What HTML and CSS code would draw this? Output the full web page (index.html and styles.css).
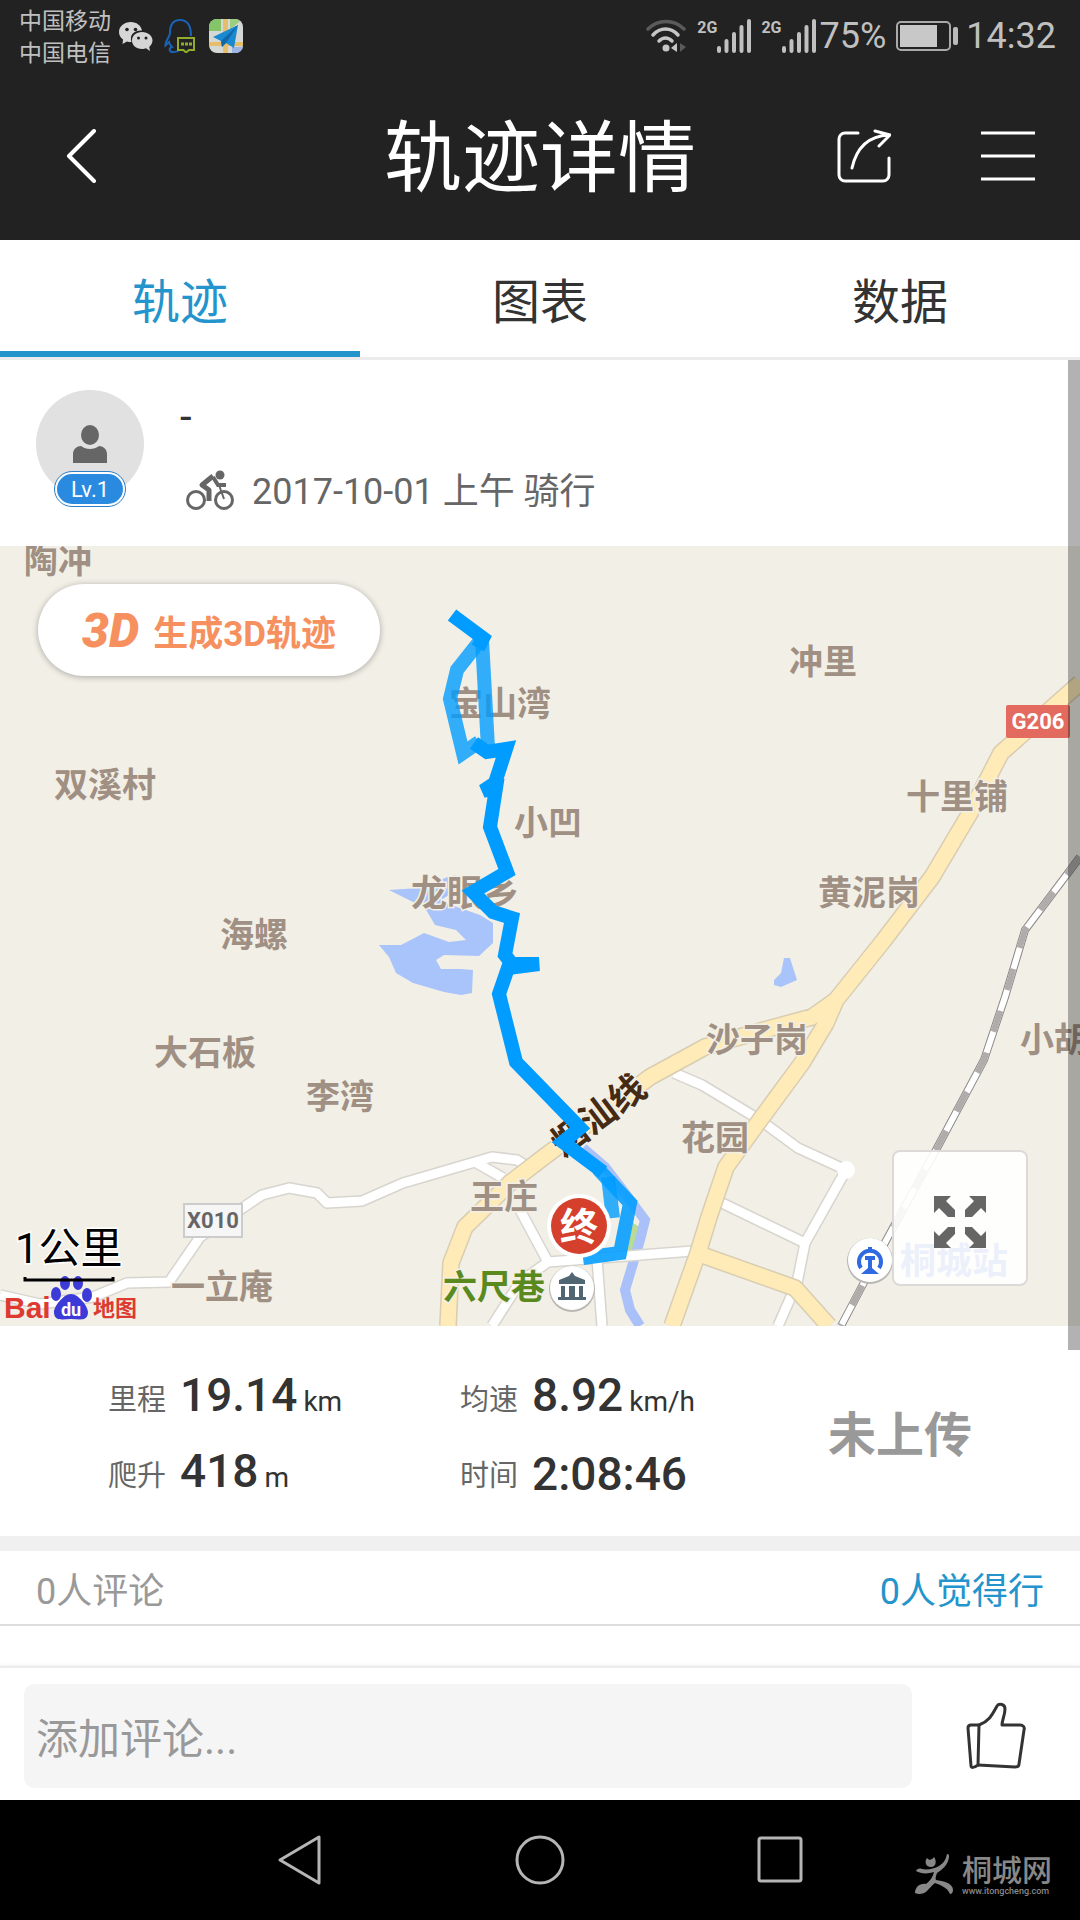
FILE: index.html
```
<!DOCTYPE html>
<html lang="zh-CN">
<head>
    <meta charset="UTF-8">
    <meta name="viewport" content="width=device-width, initial-scale=1.0">
    <title>轨迹详情</title>
    <link rel="stylesheet" href="styles.css">
</head>
<body>
    <div class="status-bar">
        <div class="status-left">
            <div class="carriers">
                <div>中国移动</div>
                <div>中国电信</div>
            </div>
            <div class="notifications">
                <!-- WeChat -->
                <svg width="34" height="34" viewBox="0 0 34 34">
                    <path d="M12 3C5 3 0 7.500 0 13c0 3 1.500 5.500 4 7.500L3.500 25l4.500-2.500c1.500.5 3 .6 4.500.5C10 15 16 11 23 11.500 22 6.500 17.500 3 12 3z" fill="#d6d6d6"/>
                    <path d="M23 13c-6 0-10 4-10 8.500S17 30 23 30c1.500 0 3-.3 4-.7l4 2.700-.8-4c2-1.700 3.300-4 3.300-6.500 0-4.500-4.500-8.500-10.500-8.500z" fill="#d6d6d6"/>
                    <circle cx="8" cy="10.500" r="1.800" fill="#222"/>
                    <circle cx="16.500" cy="10.500" r="1.800" fill="#222"/>
                    <circle cx="19.500" cy="19" r="1.500" fill="#222"/>
                    <circle cx="27" cy="19" r="1.500" fill="#222"/>
                </svg>
                <!-- QQ -->
                <svg width="34" height="34" viewBox="0 0 34 34">
                    <path d="M27 17C27 6 23 1 16 1S6 6 6 14c0 4-5 8-4.500 12.500L5 23c.5 2 1.500 3.500 3 5-3 1-3.500 5 1 5 3 0 5-.5 6-2" fill="none" stroke="#1a62b8" stroke-width="2"/>
                    <path d="M14 19h16v12h-5l-3 2.500-2.500-2.500H14z" fill="#222" stroke="#8fac2c" stroke-width="2"/>
                    <path d="M17 25h3m1 0h3m1 0h3" stroke="#8fac2c" stroke-width="3"/>
                </svg>
                <!-- Maps -->
                <svg width="34" height="34" viewBox="0 0 34 34">
                    <rect width="34" height="34" rx="8" fill="#d5d9d6"/>
                    <path d="M8 0h4v12H0V8a8 8 0 0 1 8-8z" fill="#83c568"/>
                    <path d="M21 0h5a8 8 0 0 1 5 2l-10 9z" fill="#9dcd80"/>
                    <path d="M14 0h5v34h-5zM0 23h34v4H0z" fill="#e6bd6b"/>
                    <path d="M23 28h11c-1 4-4 6-8 6h-3z" fill="#9db5e5"/>
                    <path d="M29 6 4 18l8 4 1 6 4-4 8 5z" fill="#198ad1"/>
                    <path d="M29 6 12 22l1 6 4-4z" fill="#1167a8"/>
                </svg>
            </div>
        </div>
        <div class="status-right">
            <svg class="wifi" width="40" height="34" viewBox="0 0 40 34">
                <g fill="none" stroke="#c6c6c6" stroke-width="3.500" stroke-linecap="round">
                    <path d="M2 10c10-10 26-10 36 0" stroke="#5a5a5a"/>
                    <path d="M7 16c7-8 18-8 25 0"/>
                    <path d="M13 22c4-4 9-4 13 0"/>
                </g>
                <circle cx="20" cy="29" r="3.500" fill="#c6c6c6"/>
                <path d="m31 24-6 5 6 4z" fill="#c6c6c6"/>
                <path d="M34 24v9l6-5z" fill="#5a5a5a"/>
            </svg>
            <div class="signal">
                <span>2G</span>
                <svg width="34" height="34" viewBox="0 0 34 34">
                    <path d="M2 29v3M9.500 22v10M17 15v17M24.500 8v24M32 2v30" stroke="#c0c0c0" stroke-width="4" stroke-linecap="round"/>
                </svg>
            </div>
            <div class="signal">
                <span>2G</span>
                <svg width="34" height="34" viewBox="0 0 34 34">
                    <path d="M2 29v3M9.500 22v10M17 15v17M24.500 8v24M32 2v30" stroke="#c0c0c0" stroke-width="4" stroke-linecap="round"/>
                </svg>
            </div>
            <span class="percent">75%</span>
            <svg class="battery" width="62" height="30" viewBox="0 0 62 30">
                <rect x="1" y="1" width="53" height="28" rx="4" fill="none" stroke="#aaa" stroke-width="2"/>
                <rect x="4" y="4" width="37" height="22" fill="#c8c8c8"/>
                <rect x="57" y="6" width="5" height="18" rx="2" fill="#bbb"/>
            </svg>
            <span class="clock">14:32</span>
        </div>
    </div>

    <header class="header">
        <button class="icon-btn back" aria-label="返回">
            <svg width="30" height="54" viewBox="0 0 30 54">
                <path d="M28 2 3 27l25 25" fill="none" stroke="#fff" stroke-width="4" stroke-linecap="round" stroke-linejoin="round"/>
            </svg>
        </button>
        <h1>轨迹详情</h1>
        <div class="header-actions">
            <button class="icon-btn" aria-label="分享">
                <svg width="54" height="54" viewBox="0 0 54 54">
                    <g fill="none" stroke="#fff" stroke-width="3" stroke-linecap="round" stroke-linejoin="round">
                        <path d="M21 4H8a6 6 0 0 0-6 6v36a6 6 0 0 0 6 6h38a6 6 0 0 0 6-6V29"/>
                        <path d="M15 39C19 21 30 7 52 6M38 2l15 4-11 11"/>
                    </g>
                </svg>
            </button>
            <button class="icon-btn" aria-label="菜单">
                <svg width="54" height="54" viewBox="0 0 54 54">
                    <path d="M0 4h54M0 27h54M0 50h54" stroke="#fff" stroke-width="3"/>
                </svg>
            </button>
        </div>
    </header>

    <nav class="tabs">
        <button class="tab active">轨迹</button>
        <button class="tab">图表</button>
        <button class="tab">数据</button>
    </nav>

    <main class="content">
        <div class="scrollbar"></div>

        <section class="profile">
            <div class="avatar">
                <svg width="34" height="38" viewBox="0 0 34 38">
                    <ellipse cx="17" cy="10" rx="9" ry="10" fill="#666"/>
                    <path d="M0 38V29c0-5 4-8 8-8 5 4 13 4 18 0 4 0 8 3 8 8v9z" fill="#666"/>
                </svg>
                <span class="level">Lv.1</span>
            </div>
            <div class="profile-info">
                <div class="name">-</div>
                <div class="activity">
                    <svg width="48" height="40" viewBox="0 0 48 40">
                        <g fill="none" stroke="#666">
                            <circle cx="10" cy="30" r="8.500" stroke-width="3"/>
                            <circle cx="38" cy="30" r="8.500" stroke-width="3"/>
                            <path d="M33 15l5 14" stroke-width="2"/>
                            <path d="M27 6 16 15l7 5v11" stroke-width="5" stroke-linejoin="round"/>
                            <path d="M27 7l5 8h8" stroke-width="4"/>
                        </g>
                        <circle cx="34" cy="5" r="4.500" fill="#666"/>
                    </svg>
                    <span>2017-10-01 上午 骑行</span>
                </div>
            </div>
        </section>

        <section class="map">
            <svg class="map-canvas" viewBox="0 0 1080 780">
                <!-- water and green -->
                <g fill="#a9c4fb">
                    <path d="M389 344l29-2 30-11 8-2 4 12-20 14 40 14 13 8 0 20-14 13-35-1-8 5 5 9 20 0 12 1-1 23-11 2-17-3-31-9-17-10-7-16-10-12 22 0 23-12 25 9 17-2-10-10-21-5-10-17z"/>
                    <path d="M784 412h6l7 22-16 7-7-2v-5l7-7z"/>
                </g>
                <path d="M633 677l10 6v14l-6 10h-10z" fill="#b9dc90"/>
                <path d="M583 602l22 19 20 26 20 27-5 20-15 50 5 20 10 16" fill="none" stroke="#a9c1f8" stroke-width="10"/>

                <!-- minor roads -->
                <defs>
                    <g id="minor">
                        <path d="M0 749l40 9 53-7 34-14 42-1 31-45 44-30 18-12 27-7 28 5 10 10 35-2 41-18 72-21 17-5 25 3 8 5M475 616l28 16"/>
                        <path d="M520 664l28 52 145-11M548 716l-28 20-28 44M597 713l5 67"/>
                        <path d="M674 527l28 12 58 35 38 28 48 22-41 73-8 40-19 43M722 657l83 40"/>
                    </g>
                    <g id="major">
                        <path d="M1080 137l-79 70-31 60-38 64-48 63-48 60-10 23-24 40-42 57-34 47-17 50-11 36-26 73"/>
                        <path d="M836 454l-24 17-48 13-59 17-55 30-110 83-30 23-45 44-14 36-3 63M702 709l93 33 34 38"/>
                    </g>
                </defs>
                <g fill="none" stroke-linejoin="round">
                    <use href="#minor" stroke="#d8d5cf" stroke-width="12"/>
                    <use href="#minor" stroke="#fff" stroke-width="9"/>
                    <use href="#major" stroke="#d9cdb2" stroke-width="18"/>
                    <use href="#major" stroke="#feebb8" stroke-width="15"/>
                </g>
                <circle cx="846" cy="624" r="9" fill="#fff"/>

                <!-- railway -->
                <g fill="none">
                    <path d="M1080 311l-55 73-20 67-21 63-48 90-48 87-28 53-19 36" stroke="#8b8886" stroke-width="8"/>
                    <path d="M1080 311l-55 73-20 67-21 63-48 90-48 87-28 53-19 36" stroke="#fff" stroke-width="6"/>
                    <path d="M1080 311l-55 73-20 67-21 63-48 90-48 87-28 53-19 36" stroke="#b0acac" stroke-width="6" stroke-dasharray="22"/>
                </g>

                <!-- road shields -->
                <rect x="1006" y="159" width="64" height="33" rx="2" fill="#e36a5e"/>
                <text class="shield" x="1038" y="183" fill="#fff">G206</text>
                <rect x="184" y="658" width="58" height="33" fill="#f6f6f6" stroke="#ccc" stroke-width="2"/>
                <text class="shield" x="213" y="682" fill="#666">X010</text>

                <g class="place">
                    <text x="58" y="27">陶冲</text>
                    <text x="105" y="251">双溪村</text>
                    <text x="254" y="401">海螺</text>
                    <text x="205" y="519">大石板</text>
                    <text x="340" y="563">李湾</text>
                    <text x="222" y="753">一立庵</text>
                    <text x="504" y="663">王庄</text>
                    <text x="500" y="170">宝山湾</text>
                    <text x="548" y="289">小凹</text>
                    <text x="823" y="128">冲里</text>
                    <text x="957" y="263">十里铺</text>
                    <text x="869" y="359">黄泥岗</text>
                    <text x="757" y="506">沙子岗</text>
                    <text x="1054" y="506">小胡</text>
                    <text x="715" y="604">花园</text>
                    <text class="town" x="465" y="360">龙眼乡</text>
                    <text class="sight" x="494" y="753">六尺巷</text>
                    <text class="station" x="954" y="728">桐城站</text>
                    <text class="road" x="598" y="582" transform="rotate(-37 598 569)">烟汕线</text>
                </g>

                <!-- recorded track -->
                <g fill="none" stroke="#009cff" stroke-width="14">
                    <path d="M483 91l-26 33-7 29 13 54 16-11" opacity=".8"/>
                    <path d="M482 94l6 108" opacity=".8"/>
                    <path d="M608 631l5 41" opacity=".8"/>
                    <path d="M452 69l31 23-5 10M474 197l13 9 19-3-11 34-12 8 13-3-6 39 17 45-34 20 20 20 19 6-7 37 7 9 27 0-31 4-9 26 17 68 64 66-17 14 40 30"/>
                    <path d="M598 623l32 34-10 50-37 5" opacity=".88"/>
                </g>

                <!-- finish marker -->
                <circle cx="579" cy="680" r="32" fill="#fff"/>
                <circle cx="579" cy="680" r="28" fill="#d5402c"/>
                <text class="finish" x="579" y="694">终</text>

                <!-- sight marker -->
                <circle cx="572" cy="743" r="23" fill="#b9b7b2"/>
                <circle cx="572" cy="742" r="22" fill="#fff"/>
                <path d="M572 726l3 4 10 4v4h-26v-4l10-4zM561 740h4v12h-4zM569 740h6v12h-6zM579 740h4v12h-4zM558 751h28v3h-28z" fill="#506673"/>

                <!-- railway station marker -->
                <circle cx="870" cy="715" r="23" fill="#b9b7b2"/>
                <circle cx="870" cy="714" r="22" fill="#fff"/>
                <path d="M861 722a11 11 0 1 1 18 0M870 701v4" fill="none" stroke="#2f6ae0" stroke-width="4"/>
                <path d="M865 710h10v4h-3v8l7 6h-18l7-6v-8h-3z" fill="#2f6ae0"/>

                <!-- provider logo -->
                <text class="provider" x="4" y="772">Bai</text>
                <g fill="#3d3bd8">
                    <ellipse cx="56" cy="748" rx="5" ry="7"/>
                    <ellipse cx="65" cy="737" rx="5" ry="7"/>
                    <ellipse cx="78" cy="737" rx="5" ry="7"/>
                    <ellipse cx="87" cy="749" rx="5" ry="7"/>
                    <path d="M71 748c8 0 17 13 17 18 0 10-9 7-17 7s-17 3-17-7c0-5 9-18 17-18z"/>
                </g>
                <text class="provider-du" x="71" y="770">du</text>
                <text class="provider-cn" x="93" y="770">地图</text>

                <!-- scale -->
                <text class="scale" x="15" y="717">1公里</text>
                <path d="M25 731v3h88v-3" fill="none" stroke="#000" stroke-width="3"/>
            </svg>

            <button class="btn-3d"><em>3D</em> 生成3D轨迹</button>

            <button class="btn-expand" aria-label="全屏">
                <svg width="52" height="52" viewBox="0 0 52 52">
                    <g fill="#666">
                        <path id="arrow" d="M0 0h17l-5 5 9 9v7h-7L5 12l-5 5z"/>
                        <use href="#arrow" transform="matrix(-1 0 0 1 52 0)"/>
                        <use href="#arrow" transform="matrix(1 0 0 -1 0 52)"/>
                        <use href="#arrow" transform="matrix(-1 0 0 -1 52 52)"/>
                    </g>
                </svg>
            </button>
        </section>

        <section class="stats">
            <dl class="stat-grid">
                <div class="stat"><dt>里程</dt><dd>19.14<small>km</small></dd></div>
                <div class="stat"><dt>均速</dt><dd>8.92<small>km/h</small></dd></div>
                <div class="stat"><dt>爬升</dt><dd>418<small>m</small></dd></div>
                <div class="stat"><dt>时间</dt><dd>2:08:46</dd></div>
            </dl>
            <div class="upload-state">未上传</div>
        </section>

        <section class="summary">
            <span class="comment-count">0人评论</span>
            <a href="#" class="like-count">0人觉得行</a>
        </section>
    </main>

    <footer class="comment-bar">
        <input type="text" placeholder="添加评论..." aria-label="添加评论">
        <button class="icon-btn" aria-label="点赞">
            <svg width="60" height="68" viewBox="0 0 60 68">
                <g fill="none" stroke="#333" stroke-width="3" stroke-linejoin="round">
                    <path d="M13 23C24 19 27 11 31 4c2-3 8-2 8 3 0 6-3 11-3 16h18c3 0 5 2 4 5l-5 34c0 2-2 3-4 3l-37-2"/>
                    <path d="M13 23H5c-2 0-3 1-3 3l3 38c0 2 3 2 7-1l1-40z"/>
                </g>
            </svg>
        </button>
    </footer>

    <div class="nav-bar">
        <button class="icon-btn" aria-label="后退">
            <svg width="50" height="52" viewBox="0 0 50 52">
                <path d="M44 3v46L5 26z" fill="none" stroke="#b5b5b5" stroke-width="3" stroke-linejoin="round"/>
            </svg>
        </button>
        <button class="icon-btn" aria-label="主屏幕">
            <svg width="50" height="52" viewBox="0 0 50 52">
                <circle cx="25" cy="26" r="23" fill="none" stroke="#b5b5b5" stroke-width="3"/>
            </svg>
        </button>
        <button class="icon-btn" aria-label="最近任务">
            <svg width="50" height="52" viewBox="0 0 50 52">
                <rect x="4" y="4" width="42" height="43" rx="2" fill="none" stroke="#b5b5b5" stroke-width="3"/>
            </svg>
        </button>
        <div class="watermark">
            <svg width="40" height="42" viewBox="0 0 40 42">
                <path d="M13 5c2 3 5 2 7-1 3 4 2 10-3 10s-7-5-4-9z" fill="#888"/>
                <path d="M33 1c2 0 2 1 2 3-1 8-6 12-12 16-1 3-2 5-1 7 7 1 17 3 17 10 0 2-1 4-3 4-3-7-10-9-15-11-4 3-6 6-8 8-3 3-8 4-12 2 0-6 5-10 11-9 4-3 7-7 8-12-6 2-13 2-18-1 1-2 3-3 6-2 5 1 12 0 17-3 5-3 7-7 8-12z" fill="#888"/>
            </svg>
            <div class="watermark-text">
                <div class="site">桐城网</div>
                <div class="url">www.itongcheng.com</div>
            </div>
        </div>
    </div>
</body>
</html>
```
FILE: styles.css
```
:root {
    --dark: #222;
    --primary: #2494cc;
    --text: #333;
    --muted: #999;
    --status: #c0c0c0;
    --place: #a08f83;
    --map-bg: #f2efe7;
}

* {
    box-sizing: border-box;
}

body {
    margin: 0;
    min-height: 100vh;
    display: flex;
    flex-direction: column;
    background: #fff;
    color: var(--text);
    font-family: Roboto, "Noto Sans CJK SC", sans-serif;
    font-weight: 400;
}

svg {
    display: block;
}

button {
    padding: 0;
    border: none;
    background: none;
    font: inherit;
    color: inherit;
    cursor: pointer;
}

/* Status bar */
.status-bar {
    display: flex;
    justify-content: space-between;
    align-items: center;
    height: 72px;
    padding: 0 24px 0 19px;
    background: var(--dark);
    color: var(--status);
}

.status-left,
.status-right,
.notifications {
    display: flex;
    align-items: center;
}

.carriers {
    padding-top: 4px;
    font-size: 23px;
    line-height: 32px;
}

.notifications {
    gap: 11px;
    margin-left: 8px;
}

.wifi {
    margin-right: 11px;
}

.signal {
    display: flex;
    align-items: flex-start;
    margin-right: 10px;
}

.signal span {
    font-size: 16px;
    line-height: 18px;
    font-weight: 700;
}

.percent,
.clock {
    font-size: 36px;
    line-height: 40px;
}

.percent {
    margin-left: -6px;
}

.battery {
    margin: 0 8px 0 10px;
}

/* Header */
.header {
    display: grid;
    grid-template-columns: 1fr auto 1fr;
    align-items: center;
    height: 168px;
    padding: 0 45px;
    background: var(--dark);
    color: #fff;
}

.header h1 {
    margin: 0;
    padding-top: 8px;
    font-size: 78px;
    line-height: 100px;
    font-weight: 400;
}

.back {
    justify-self: start;
    margin-left: 21px;
}

.header-actions {
    display: flex;
    justify-content: flex-end;
    gap: 90px;
}

/* Tabs */
.tabs {
    display: flex;
    height: 120px;
    border-bottom: 3px solid #ececec;
}

.tab {
    flex: 1;
    padding-top: 14px;
    border-bottom: 6px solid transparent;
    font-size: 48px;
    line-height: 60px;
}

.tab.active {
    color: var(--primary);
    border-bottom-color: var(--primary);
}

/* Content */
.content {
    position: relative;
    flex: 1;
}

.scrollbar {
    position: absolute;
    top: 0;
    right: 0;
    z-index: 1;
    width: 12px;
    height: 990px;
    background: rgba(0, 0, 0, 0.3);
}

.profile {
    display: flex;
    gap: 36px;
    height: 186px;
    padding: 30px 36px;
}

.avatar {
    position: relative;
    display: flex;
    justify-content: center;
    align-items: center;
    width: 108px;
    height: 108px;
    border-radius: 50%;
    background: #e1e1e1;
}

.level {
    position: absolute;
    left: 19px;
    bottom: -8px;
    width: 70px;
    height: 34px;
    border: 2px solid #fff;
    border-radius: 17px;
    outline: 1px solid #2a7fc8;
    background: #2a8ae0;
    color: #fff;
    font-size: 22px;
    line-height: 31px;
    text-align: center;
}

.name {
    height: 56px;
    font-size: 42px;
    line-height: 54px;
}

.activity {
    display: flex;
    align-items: center;
    gap: 18px;
    height: 40px;
    margin: 24px 0 0 6px;
    color: #666;
    font-size: 36px;
    line-height: 40px;
}

.activity span {
    padding-top: 4px;
}

/* Map */
.map {
    position: relative;
    overflow: hidden;
    background: var(--map-bg);
}

.map-canvas {
    width: 100%;
    height: auto;
}

.place text {
    fill: var(--place);
    stroke: var(--map-bg);
    stroke-width: 3px;
    paint-order: stroke;
    font-size: 34px;
    font-weight: 700;
    text-anchor: middle;
}

.place .town,
.place .station,
.place .road {
    font-size: 36px;
}

.place .sight {
    fill: #5a8a1e;
}

.place .station {
    fill: #3d6bd0;
}

.place .road {
    fill: #452a14;
}

.shield {
    font-size: 22px;
    font-weight: 700;
    text-anchor: middle;
}

.finish {
    fill: #fff;
    font-size: 38px;
    font-weight: 700;
    text-anchor: middle;
}

.provider {
    fill: #dd3a32;
    font-family: "Liberation Sans", sans-serif;
    font-size: 30px;
    font-weight: 700;
}

.provider-du {
    fill: #fff;
    font-size: 18px;
    font-weight: 700;
    text-anchor: middle;
}

.provider-cn {
    fill: #dd3a32;
    font-size: 22px;
    font-weight: 700;
}

.scale {
    fill: #000;
    stroke: #fff;
    stroke-width: 3px;
    paint-order: stroke;
    font-size: 42px;
}

.btn-3d {
    position: absolute;
    top: 38px;
    left: 38px;
    display: flex;
    align-items: center;
    justify-content: center;
    gap: 14px;
    width: 342px;
    height: 92px;
    border-radius: 46px;
    background: #fff;
    box-shadow: 0 1px 6px rgba(0, 0, 0, 0.3);
    color: #f6915f;
    font-size: 35px;
    font-weight: 700;
}

.btn-3d em {
    font-size: 48px;
    font-weight: 900;
}

.btn-expand {
    position: absolute;
    right: 52px;
    bottom: 40px;
    display: flex;
    align-items: center;
    justify-content: center;
    width: 136px;
    height: 136px;
    padding-top: 8px;
    border: 2px solid #dcd9d8;
    border-radius: 8px;
    background: rgba(255, 255, 255, 0.9);
}

/* Stats */
.stats {
    display: flex;
    height: 225px;
    padding: 34px 108px 0;
    border-bottom: 15px solid #f0f0f0;
}

.stat-grid {
    display: grid;
    grid-template-columns: 352px 352px;
    grid-auto-rows: 76px;
    margin: 0;
}

.stat {
    display: flex;
    align-items: center;
    gap: 14px;
}

.stat dt {
    padding-top: 4px;
    color: #666;
    font-size: 29px;
    line-height: 40px;
}

.stat dd {
    margin: 0;
    font-size: 46px;
    line-height: 76px;
    font-weight: 500;
}

.stat small {
    margin-left: 6px;
    font-size: 28px;
    font-weight: 400;
}

.upload-state {
    margin-left: 16px;
    color: var(--muted);
    font-size: 48px;
    line-height: 152px;
    font-weight: 700;
    white-space: nowrap;
}

/* Comments */
.summary {
    display: flex;
    justify-content: space-between;
    align-items: center;
    height: 75px;
    padding: 0 36px;
    border-bottom: 2px solid #ddd;
    font-size: 36px;
}

.comment-count {
    color: var(--muted);
}

.like-count {
    color: var(--primary);
    text-decoration: none;
}

.comment-bar {
    display: flex;
    align-items: center;
    justify-content: space-between;
    height: 134px;
    padding: 4px 54px 0 24px;
    border-top: 2px solid #ececec;
    box-shadow: 0 -1px 3px rgba(0, 0, 0, 0.06);
}

.comment-bar input {
    flex: 1;
    height: 104px;
    margin-right: 54px;
    padding: 6px 12px 0;
    border: none;
    border-radius: 10px;
    background: #f5f5f5;
    font: inherit;
    font-size: 42px;
}

.comment-bar input::placeholder {
    color: var(--muted);
}

/* System navigation */
.nav-bar {
    position: relative;
    display: flex;
    align-items: center;
    justify-content: center;
    gap: 190px;
    height: 120px;
    background: #000;
}

.watermark {
    position: absolute;
    right: 28px;
    bottom: 24px;
    display: flex;
    align-items: center;
    gap: 8px;
    color: #888;
}

.watermark-text {
    padding-top: 4px;
}

.site {
    font-size: 30px;
    line-height: 30px;
    font-weight: 500;
}

.url {
    font-size: 9px;
    line-height: 10px;
    font-weight: 500;
}
```
